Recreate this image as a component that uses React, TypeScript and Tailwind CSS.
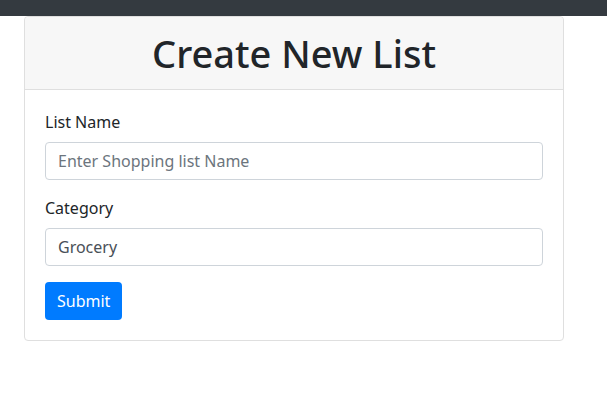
import React from "react";

export default function App() {
  return (
    <div
      className="min-h-[412px] bg-white text-[#212529]"
      style={{ fontFamily: '"Noto Sans", "Open Sans", sans-serif' }}
    >
      <div className="h-4 bg-[#343a40]" />
      <div className="ml-6 w-[540px] rounded border border-[#dfdfdf] bg-white">
        <div className="rounded-t border-b border-[#dfdfdf] bg-[#f7f7f7] px-5 py-3 text-center">
          <h1 className="text-[38px] leading-[48px] font-medium">Create New List</h1>
        </div>
        <div className="p-5">
          <div className="mb-4">
            <label className="mb-2 block text-base leading-6">List Name</label>
            <input
              type="text"
              placeholder="Enter Shopping list Name"
              className="block h-[38px] w-full rounded border border-[#ced4da] px-3 text-base leading-6 text-[#495057] placeholder:text-[#6c757d] outline-none"
            />
          </div>
          <div className="mb-4">
            <label className="mb-2 block text-base leading-6">Category</label>
            <input
              type="text"
              defaultValue="Grocery"
              className="block h-[38px] w-full rounded border border-[#ced4da] px-3 text-base leading-6 text-[#495057] outline-none"
            />
          </div>
          <button className="h-[38px] rounded bg-[#007bff] px-3 text-base leading-6 text-white">
            Submit
          </button>
        </div>
      </div>
    </div>
  );
}
